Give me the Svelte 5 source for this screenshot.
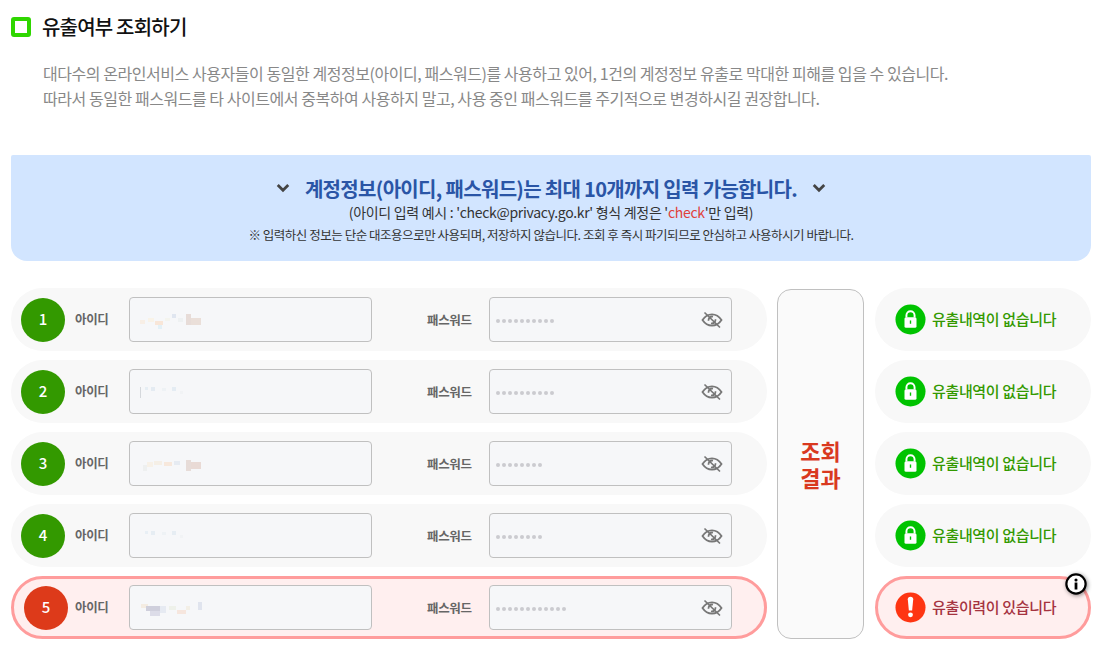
<script>
  // pixel smudges stand in for the masked account ids: [x, y, w, h, colour]
  const rows = [
    { id: 1, pw: 10, leak: false, blur: [[4,10,5,4,"#f8efe6"],[12,8,6,4,"#f9f3e8"],[19,11,8,4,"#f8e6d8"],[22,15,4,4,"#e3f0f6"],[29,8,5,3,"#f4f4ee"],[36,4,4,4,"#e0e6f0"],[42,8,5,4,"#eef1f2"],[50,4,5,11,"#e7dcd8"],[55,8,10,7,"#eadfd9"]] },
    { id: 2, pw: 10, leak: false, blur: [[4,5,1,11,"#d5d8dc"],[9,5,3,3,"#e6eef4"],[15,5,4,4,"#e4ebf2"],[26,6,4,3,"#eef2f5"],[36,5,4,4,"#e4ecf3"],[44,9,3,3,"#f1f3f5"]] },
    { id: 3, pw: 8, leak: false, blur: [[7,11,4,6,"#eef0f0"],[11,8,6,5,"#f7f1e8"],[18,7,8,4,"#f5efe6"],[28,8,8,4,"#f7e8dc"],[38,7,6,4,"#e6ebf2"],[50,6,5,11,"#e7dcd8"],[55,8,10,7,"#e9dad5"]] },
    { id: 4, pw: 8, leak: false, blur: [[9,5,3,3,"#e8eff5"],[15,5,4,4,"#e6edf3"],[26,6,4,3,"#eef2f5"],[36,5,4,4,"#e6edf3"],[44,9,3,3,"#f1f3f5"]] },
    { id: 5, pw: 12, leak: true, blur: [[5,6,7,4,"#f4ece2"],[10,8,14,5,"#cfcfdc"],[14,13,10,5,"#dcdce8"],[24,8,6,7,"#e6eaf2"],[33,8,7,4,"#eef1ea"],[41,12,9,4,"#f6e6de"],[50,8,4,4,"#f3efe6"],[62,4,4,8,"#e0e4ee"]] },
  ];
</script>

<main class="page">
  <h2 class="title"><span class="mark"></span>유출여부 조회하기</h2>
  <p class="desc">
    대다수의 온라인서비스 사용자들이 동일한 계정정보(아이디, 패스워드)를 사용하고 있어, 1건의 계정정보 유출로 막대한 피해를 입을 수 있습니다.<br />
    따라서 동일한 패스워드를 타 사이트에서 중복하여 사용하지 말고, 사용 중인 패스워드를 주기적으로 변경하시길 권장합니다.
  </p>

  <section class="banner">
    <div class="headline">
      <svg class="chev" viewBox="0 0 12 8"><path d="M1.5 1.5 6 6l4.5-4.5" /></svg>
      <strong>계정정보(아이디, 패스워드)는 최대 10개까지 입력 가능합니다.</strong>
      <svg class="chev" viewBox="0 0 12 8"><path d="M1.5 1.5 6 6l4.5-4.5" /></svg>
    </div>
    <div class="sub">(아이디 입력 예시 : 'check@privacy.go.kr' 형식 계정은 '<em>check</em>'만 입력)</div>
    <div class="note">※ 입력하신 정보는 단순 대조용으로만 사용되며, 저장하지 않습니다. 조회 후 즉시 파기되므로 안심하고 사용하시기 바랍니다.</div>
  </section>

  <section class="board">
    <div class="rows">
      {#each rows as row}
        <div class="row" class:leak={row.leak}>
          <span class="num">{row.id}</span>
          <span class="lab lab-id">아이디</span>
          <div class="field">
            <div class="smudge">
              {#each row.blur as b}
                <i style="left:{b[0]}px;top:{b[1]}px;width:{b[2]}px;height:{b[3]}px;background:{b[4]}"></i>
              {/each}
            </div>
          </div>
          <span class="lab lab-pw">패스워드</span>
          <div class="field pw">
            <div class="dots">
              {#each Array(row.pw) as _}<b></b>{/each}
            </div>
            <svg class="eye" viewBox="0 0 22 18">
              <path class="eye-line" d="M1.5 9C4 5.2 7.2 3.4 11 3.4S18 5.2 20.5 9C18 12.8 14.8 14.6 11 14.6S4 12.8 1.5 9Z" />
              <path class="eye-line" d="M7.6 9.8A3.6 3.6 0 0 1 12 5.6M14.4 8.2A3.6 3.6 0 0 1 10 12.4" />
              <path class="eye-slash" d="M3.5 1.5 19 16.5" />
            </svg>
          </div>
        </div>
      {/each}
    </div>

    <div class="submit">조회<br />결과</div>

    <div class="results">
      {#each rows as row}
        <div class="result" class:leak={row.leak}>
          {#if row.leak}
            <svg class="badge" viewBox="0 0 32 32">
              <circle cx="16" cy="16" r="15.5" fill="#fe3512" />
              <path d="M13.2 7.6a2.8 2.8 0 0 1 5.6 0L17.7 19h-3.4Z" fill="#fff" />
              <circle cx="16" cy="23.6" r="2.5" fill="#fff" />
            </svg>
            <span class="msg">유출이력이 있습니다</span>
            <svg class="info" viewBox="0 0 24 24">
              <circle cx="12" cy="12" r="10.5" fill="#fff" stroke="#000" stroke-width="2.4" />
              <circle cx="12" cy="7.6" r="1.7" fill="#000" />
              <rect x="10.5" y="10.4" width="3" height="7.6" fill="#000" />
            </svg>
          {:else}
            <svg class="badge" viewBox="0 0 32 32">
              <circle cx="16" cy="16" r="15.5" fill="#00c300" />
              <path d="M11.8 14v-2.4a4.2 4.2 0 0 1 8.4 0V14" fill="none" stroke="#fff" stroke-width="2" />
              <rect x="9.8" y="13.6" width="12.4" height="11" rx="1.6" fill="#fff" />
              <rect x="15.3" y="17" width="1.4" height="3.4" fill="#00c300" />
            </svg>
            <span class="msg">유출내역이 없습니다</span>
          {/if}
        </div>
      {/each}
    </div>
  </section>
</main>

<style>
  :global(body) {
    margin: 0;
    background: #fff;
    font-family: "Noto Sans CJK KR", "Noto Sans", sans-serif;
  }

  .page {
    width: 1107px;
    height: 648px;
    overflow: hidden;
    box-sizing: border-box;
    padding: 0 16px 0 11px;
  }

  .title {
    display: flex;
    align-items: center;
    gap: 11px;
    margin: 0;
    padding: 15px 0 0 0;
    height: 24px;
    font-size: 20px;
    font-weight: 500;
    line-height: 24px;
    letter-spacing: -0.8px;
    color: #111;
  }

  .mark {
    width: 20px;
    height: 20px;
    box-sizing: border-box;
    margin-bottom: 1px;
    border: 4px solid #2fd600;
    border-radius: 3px;
  }

  .desc {
    margin: 22px 0 0 32px;
    font-size: 16px;
    line-height: 25px;
    letter-spacing: -0.45px;
    color: #888;
    white-space: nowrap;
  }

  .banner {
    margin-top: 44px;
    height: 106px;
    box-sizing: border-box;
    padding-top: 19px;
    background: #d2e5ff;
    border-radius: 2px 2px 16px 16px;
    text-align: center;
  }

  .headline {
    display: flex;
    justify-content: center;
    align-items: center;
    gap: 15px;
    height: 28px;
    font-size: 20px;
    letter-spacing: -0.68px;
    color: #2a55a6;
  }

  .headline strong {
    font-weight: 700;
  }

  .chev {
    width: 14px;
    height: 10px;
    fill: none;
    stroke: #444;
    stroke-width: 2.4;
  }

  .sub {
    margin-top: 1px;
    font-size: 14px;
    line-height: 19px;
    letter-spacing: -0.3px;
    color: #333;
  }

  .sub em {
    font-style: normal;
    color: #e0413a;
  }

  .note {
    margin-top: 4px;
    font-size: 12.5px;
    line-height: 17px;
    letter-spacing: -0.47px;
    color: #333;
  }

  .board {
    display: flex;
    margin-top: 27px;
  }

  .rows {
    display: flex;
    flex-direction: column;
    gap: 9px;
    width: 756px;
  }

  .row {
    display: flex;
    align-items: center;
    height: 63px;
    box-sizing: border-box;
    padding-left: 10px;
    background: #f8f8f8;
    border-radius: 32px;
  }

  .num {
    display: flex;
    align-items: center;
    justify-content: center;
    flex: none;
    width: 44px;
    height: 44px;
    box-sizing: border-box;
    padding-bottom: 2px;
    border-radius: 50%;
    background: #339900;
    color: #fff;
    font-size: 15px;
    font-weight: 500;
  }

  .lab {
    flex: none;
    font-size: 12.5px;
    font-weight: 700;
    letter-spacing: -0.35px;
    color: #666;
  }

  .lab-id {
    width: 54px;
    margin-left: 10px;
    padding-bottom: 2px;
  }

  .lab-pw {
    width: 62px;
    margin-left: 55px;
  }

  .field {
    position: relative;
    display: flex;
    align-items: center;
    justify-content: space-between;
    flex: none;
    width: 243px;
    height: 45px;
    box-sizing: border-box;
    padding: 0 8px 0 6px;
    background: #f6f7f9;
    border: 1px solid #c0c0c0;
    border-radius: 4px;
  }

  .smudge {
    position: relative;
    width: 70px;
    height: 20px;
  }

  .smudge i {
    position: absolute;
    display: block;
  }

  .dots {
    display: flex;
    gap: 2px;
    margin-top: 3px;
  }

  .dots b {
    display: block;
    width: 4px;
    height: 4px;
    border-radius: 50%;
    background: #cbcbd0;
  }

  .eye {
    width: 22px;
    height: 18px;
    fill: none;
  }

  .eye-line {
    stroke: #777;
    stroke-width: 1.8;
  }

  .eye-slash {
    stroke: #777;
    stroke-width: 1.7;
  }

  .row.leak {
    padding-left: 10px;
    background: #ffefef;
    border: 3px solid #ff9c9c;
  }

  .row.leak .num {
    background: #dd3a1a;
  }

  .row.leak .lab-id {
    margin-left: 7px;
  }

  .submit {
    flex: none;
    width: 87px;
    height: 350px;
    margin: 1px 0 0 10px;
    box-sizing: border-box;
    padding-top: 147px;
    background: #fafafa;
    border: 1px solid #c0c0c0;
    border-radius: 14px;
    text-align: center;
    font-size: 22px;
    font-weight: 700;
    line-height: 27px;
    color: #d9391f;
  }

  .results {
    display: flex;
    flex-direction: column;
    gap: 9px;
    width: 216px;
    margin-left: 11px;
  }

  .result {
    position: relative;
    display: flex;
    align-items: center;
    gap: 6px;
    height: 63px;
    box-sizing: border-box;
    padding-left: 20px;
    background: #f8f8f8;
    border-radius: 32px;
    font-size: 15px;
    font-weight: 500;
    letter-spacing: -0.35px;
    color: #339900;
  }

  .msg {
    padding-bottom: 2px;
  }

  .result.leak {
    padding-left: 17px;
    background: #ffefef;
    border: 3px solid #ff9c9c;
    color: #a5333f;
  }

  .badge {
    flex: none;
    width: 31px;
    height: 31px;
  }

  .info {
    position: absolute;
    top: -6px;
    right: 1px;
    width: 22px;
    height: 22px;
    filter: drop-shadow(1px 1px 2px rgba(0, 0, 0, 0.45));
  }
</style>
